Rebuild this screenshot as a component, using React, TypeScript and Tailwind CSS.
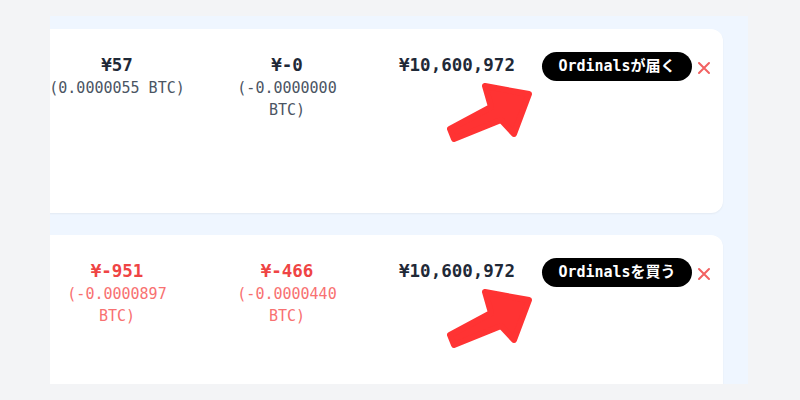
import React from "react";

const mono = "font-['DejaVu_Sans_Mono','Noto_Sans_CJK_JP',monospace]";

function Arrow() {
  return (
    <svg
      className="absolute right-[187px] top-[51px]"
      width="92"
      height="66"
      viewBox="0 0 92 66"
    >
      <polygon
        points="10,59 6,49 47,27 41,6 85,14 70,54 57,40"
        fill="#ff3333"
        stroke="#ff3333"
        strokeWidth="6"
        strokeLinejoin="round"
      />
    </svg>
  );
}

function XIcon() {
  return (
    <svg width="14" height="14" viewBox="0 0 14 14" className="shrink-0 mt-[9px]">
      <path d="M2 2 L12 12 M12 2 L2 12" stroke="#f26262" strokeWidth="2" strokeLinecap="round" />
    </svg>
  );
}

function Col({ amount, btc, red }: { amount: string; btc: string; red?: boolean }) {
  return (
    <div className={`w-[170px] shrink-0 px-[16px] flex flex-col items-center text-center ${mono}`}>
      <div
        className={`text-[17.5px] leading-[24px] font-bold ${red ? "text-[#ef4444]" : "text-[#1f2937]"}`}
      >
        {amount}
      </div>
      <div className={`text-[15px] leading-[22px] ${red ? "text-[#f87171]" : "text-[#4b5563]"}`}>
        {btc}
      </div>
    </div>
  );
}

function Card({
  a,
  b,
  label,
  red,
}: {
  a: [string, string];
  b: [string, string];
  label: string;
  red?: boolean;
}) {
  return (
    <div className="relative -ml-[18px] h-[184px] shrink-0 bg-white rounded-xl shadow-[0_1px_2px_rgba(0,0,0,0.05)] flex items-start pt-[24px] pr-[13px]">
      <Col amount={a[0]} btc={a[1]} red={red} />
      <Col amount={b[0]} btc={b[1]} red={red} />
      <div className={`w-[170px] shrink-0 text-center text-[17.5px] leading-[24px] font-bold text-[#1f2937] ${mono}`}>
        ¥10,600,972
      </div>
      <div className="flex items-start gap-[5px] -mt-[1px]">
        <div
          className={`h-[29px] w-[150px] rounded-full bg-black text-white text-[15px] font-bold flex items-center justify-center ${mono}`}
        >
          {label}
        </div>
        <XIcon />
      </div>
      <Arrow />
    </div>
  );
}

export default function App() {
  return (
    <div className="w-[800px] h-[400px] bg-[#f3f4f6] pt-[16px] pb-[16px] pl-[50px] pr-[52px]">
      <div className="h-full bg-[#eff6ff] overflow-hidden pt-[13px] pr-[25px] flex flex-col gap-[22px]">
        <Card
          a={["¥57", "(0.0000055 BTC)"]}
          b={["¥-0", "(-0.0000000 BTC)"]}
          label="Ordinalsが届く"
        />
        <Card
          a={["¥-951", "(-0.0000897 BTC)"]}
          b={["¥-466", "(-0.0000440 BTC)"]}
          label="Ordinalsを買う"
          red
        />
      </div>
    </div>
  );
}
